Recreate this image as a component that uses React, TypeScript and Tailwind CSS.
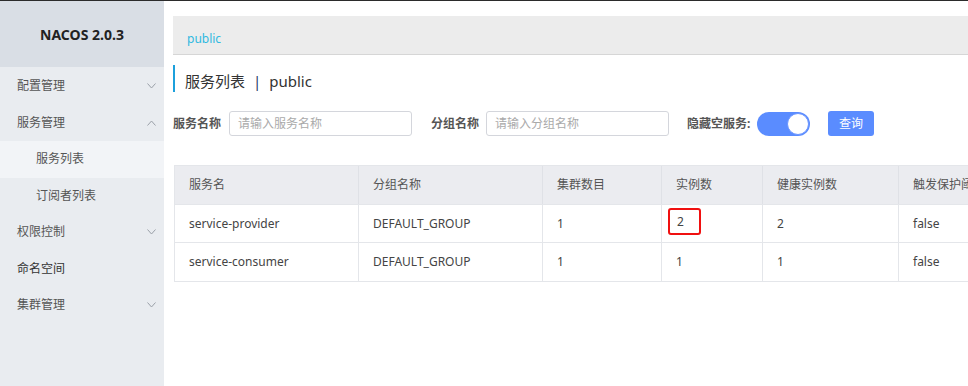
import React from 'react'

const font = { fontFamily: '"Noto Sans", "Noto Sans CJK SC", sans-serif' }

function Chevron({ up }: { up?: boolean }) {
  return (
    <svg width="9" height="6" viewBox="0 0 9 6" className="text-[#9aa0a8]">
      <polyline
        points={up ? '0.5,5.5 4.5,1 8.5,5.5' : '0.5,0.5 4.5,5 8.5,0.5'}
        fill="none"
        stroke="currentColor"
        strokeWidth="1"
      />
    </svg>
  )
}

const menu = [
  { label: '配置管理', chevron: 'down' },
  { label: '服务管理', chevron: 'up' },
  { label: '服务列表', sub: true, active: true },
  { label: '订阅者列表', sub: true },
  { label: '权限控制', chevron: 'down' },
  { label: '命名空间', dark: true },
  { label: '集群管理', chevron: 'down' },
]

const cols = [
  { title: '服务名', w: 'w-[184px]' },
  { title: '分组名称', w: 'w-[184px]' },
  { title: '集群数目', w: 'w-[119px]' },
  { title: '实例数', w: 'w-[101px]' },
  { title: '健康实例数', w: 'w-[136px]' },
  { title: '触发保护阈值', w: 'w-[120px]' },
]

const rows = [
  ['service-provider', 'DEFAULT_GROUP', '1', '2', '2', 'false'],
  ['service-consumer', 'DEFAULT_GROUP', '1', '1', '1', 'false'],
]

export default function App() {
  return (
    <div className="w-[968px] h-[386px] overflow-hidden bg-white border-t border-[#2b2b2b] flex" style={font}>
      {/* Sidebar */}
      <div className="w-[164px] shrink-0 bg-[#e9ecf0] flex flex-col">
        <div className="h-[66px] bg-[#d9dee5] flex items-center justify-center text-[14px] font-bold text-[#222]">
          NACOS 2.0.3
        </div>
        <div className="h-[1px]" />
        {menu.map((m) => (
          <div
            key={m.label}
            className={`h-[36.5px] flex items-center justify-between pr-[8px] text-[12px] ${m.sub ? 'pl-[36px] text-[#555]' : 'pl-[17px]'} ${m.dark ? 'text-[#333]' : m.sub ? '' : 'text-[#555]'} ${m.active ? 'bg-[#f2f4f7]' : ''}`}
          >
            <span>{m.label}</span>
            {m.chevron && <Chevron up={m.chevron === 'up'} />}
          </div>
        ))}
      </div>

      {/* Main */}
      <div className="flex-1 min-w-0 pl-[9px] pt-[15px] overflow-hidden">
        <div className="h-[39px] bg-[#ececec] border-b border-[#d6d6d6] flex items-center pt-[7px] pl-[14px] text-[12px] text-[#2fb9e0]">
          public
        </div>

        <div className="mt-[10px] h-[27px] border-l-[2px] border-[#1ca0dc] flex items-center pt-[5px] pl-[10px] text-[15px] text-[#333]">
          服务列表<span className="mx-[8px] text-[#2a3a6a]">|</span>public
        </div>

        <div className="mt-[19px] flex items-center h-[25px] text-[12px]">
          <span className="font-bold text-[#555] w-[56px]">服务名称</span>
          <div className="w-[183px] h-[25px] border border-[#d4d6dc] rounded-[3px] flex items-center pl-[8px] text-[#aaa]">
            请输入服务名称
          </div>
          <span className="ml-[19px] font-bold text-[#555] w-[55px]">分组名称</span>
          <div className="w-[183px] h-[25px] border border-[#d4d6dc] rounded-[3px] flex items-center pl-[8px] text-[#aaa]">
            请输入分组名称
          </div>
          <span className="ml-[18px] font-bold text-[#555] w-[70px]">隐藏空服务:</span>
          <div className="w-[53px] h-[24px] rounded-full bg-[#5a8cff] flex items-center justify-end pr-[1px]">
            <div className="w-[22px] h-[22px] rounded-full bg-white border border-[#6b96ff]" />
          </div>
          <button className="ml-[18px] w-[46px] h-[25px] rounded-[3px] bg-[#5a8cff] text-white text-[12px]">查询</button>
        </div>

        <div className="mt-[29px] ml-[1px] w-max border-l border-t border-b border-[#e4e6ea] text-[12px] text-[#444]">
          <div className="flex h-[39px] bg-[#ebecf0] border-b border-[#e4e6ea]">
            {cols.map((c) => (
              <div key={c.title} className={`${c.w} shrink-0 flex items-center pl-[14px] border-r border-[#dfe1e6] text-[#555]`}>
                {c.title}
              </div>
            ))}
          </div>
          {rows.map((r, ri) => (
            <div key={ri} className={`flex h-[38px] ${ri === 0 ? 'border-b border-[#e4e6ea]' : ''}`}>
              {r.map((v, i) => (
                <div key={i} className={`${cols[i].w} shrink-0 flex items-center pl-[14px] border-r border-[#e4e6ea]`}>
                  {ri === 0 && i === 3 ? (
                    <span className="-ml-[8px] w-[33px] h-[27px] -translate-y-[2px] border-2 border-[#f01010] rounded-[3px] flex items-center pl-[7px]">
                      {v}
                    </span>
                  ) : (
                    v
                  )}
                </div>
              ))}
            </div>
          ))}
        </div>
      </div>
    </div>
  )
}
